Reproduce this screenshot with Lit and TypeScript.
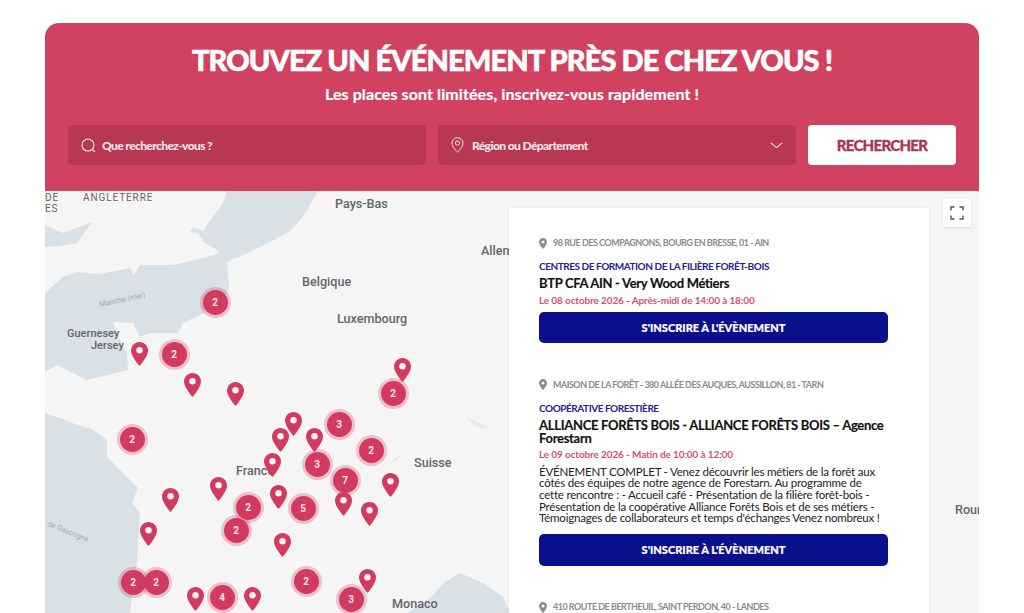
import { LitElement, html, css, svg } from "lit";
import { customElement } from "lit/decorators.js";

const OX = 45, OY = 191;
// pins: centre x, top y (page coordinates)
const PINS: [number, number][] = [
  [139, 342], [192, 373], [235, 382], [402, 358], [293, 412], [280, 428], [314, 428],
  [272, 453], [278, 485], [218, 477], [170, 488], [148, 522], [282, 533], [195, 587],
  [252, 587], [367, 569], [390, 473], [369, 502],
];
const TOP_PINS: [number, number][] = [[343, 492]];
// clusters: centre x, centre y, label
const CLUSTERS: [number, number, number][] = [
  [215, 302, 2], [174, 354, 2], [393, 393, 2], [132, 439, 2], [248, 507, 2], [236, 530, 2],
  [133, 582, 2], [156, 582, 2], [222, 597, 4], [339, 424, 3], [371, 450, 2], [317, 464, 3],
  [345, 480, 7], [303, 508, 5], [306, 581, 2], [351, 599, 3],
];
const LABELS: [string, number, number, string][] = [
  ["Pays-Bas", 335, 204, ""], ["Allen", 481, 251, ""], ["Belgique", 302, 282, ""],
  ["Luxembourg", 337, 319, ""], ["Guernesey", 67, 334, "isle"], ["Jersey", 91, 346, "isle"],
  ["France", 236, 471, ""], ["Suisse", 414, 463, ""], ["Monaco", 392, 604, ""], ["Roun", 955, 510, ""],
  ["ANGLETERRE", 83, 198, "caps"], ["DE", 45, 198, "caps"], ["ES", 45, 209, "caps"],
  ["Manche (mer)", 99, 300, "water rot1"], ["de Gascogne", 46, 532, "water rot2"],
];

const pinSvg = svg`<path d="M8.500 0C3.800 0 0 3.800 0 8.500 0 14.500 8.500 24 8.500 24S17 14.500 17 8.500C17 3.800 13.200 0 8.500 0Z" fill="#d23a60"/><circle cx="8.500" cy="8.200" r="3.200" fill="#fdf3f5"/>`;

@customElement("app-root")
export class AppRoot extends LitElement {
  static styles = css`
    :host { display: block; height: 613px; overflow: hidden; padding: 23px 45px 0; box-sizing: border-box; background: #fff;
      font-family: "Lato", "Liberation Sans", sans-serif; }
    .head { background: #d14261; border-radius: 14px 14px 0 0; height: 168px; padding: 0 23px; box-sizing: border-box; color: #fff; display: flex; flex-direction: column; }
    h1 { margin: 19px 0 0; height: 36px; line-height: 36px; font-size: 29px; font-weight: 900; text-align: center; white-space: nowrap; letter-spacing: -0.9px; -webkit-text-stroke: 0.6px #fff; }
    .sub { margin-top: 5px; height: 22px; line-height: 22px; font-size: 16px; font-weight: 700; text-align: center; letter-spacing: 0.1px; -webkit-text-stroke: 0.2px #fff; }
    .search { margin-top: 20px; display: grid; grid-template-columns: 358px 358px 148px; gap: 12px; height: 40px; }
    .field { background: #b83751; border-radius: 4px; display: flex; align-items: center; padding: 0 13px; gap: 6px; font-size: 12px; font-weight: 900; letter-spacing: -0.6px; color: #f6e4e8; }
    .field svg { flex: none; }
    .field .grow { flex: 1; }
    .loc { gap: 8px; }
    .btn { background: #fff; border-radius: 4px; display: flex; align-items: center; justify-content: center; color: #a83652; font-size: 15px; font-weight: 900; letter-spacing: -0.7px; -webkit-text-stroke: 0.3px #a83652; }
    .map { position: relative; height: 422px; overflow: hidden; background: #f5f5f5; }
    .sea { position: absolute; inset: 0; width: 100%; height: 100%; }
    .lake { fill-opacity: .6; }
    .lab { position: absolute; font-family: Roboto, "Liberation Sans", sans-serif; font-size: 12.6px; font-weight: 500; color: #62666b; line-height: 14px; margin-top: -7px; white-space: nowrap; }
    .isle { font-size: 11px; }
    .caps { font-size: 10px; font-weight: 400; letter-spacing: 0.9px; color: #666; }
    .water { font-size: 7.5px; font-weight: 400; color: #a3abb3; }
    .rot1 { transform: rotate(-12deg); }
    .rot2 { transform: rotate(22deg); }
    .pin { position: absolute; width: 17px; height: 24px; margin-left: -8.5px; }
    .cluster { position: absolute; width: 25px; height: 25px; margin: -12.5px 0 0 -12.5px; border-radius: 50%; background: #d23a60; box-shadow: 0 0 0 3px rgba(210,58,96,.28); color: #fbe4e9; font-family: Roboto, sans-serif; font-size: 10px; font-weight: 700; display: flex; align-items: center; justify-content: center; }
    .card { position: absolute; left: 464px; top: 17px; width: 420px; height: 420px; background: #fff; padding: 28px 41px 0 30px; box-sizing: border-box; box-shadow: 0 0 4px rgba(0,0,0,.06); display: flex; flex-direction: column; gap: 34.5px; }
    .item { display: flex; flex-direction: column; }
    .addr { height: 14px; line-height: 14px; display: flex; align-items: center; gap: 6px; font-size: 9px; font-weight: 700; color: #8b8b8b; letter-spacing: -0.5px; white-space: nowrap; }
    .cat { margin-top: 9px; height: 14px; line-height: 14px; font-size: 10px; font-weight: 700; color: #26228e; letter-spacing: -0.45px; white-space: nowrap; }
    .title { margin-top: 4px; font-size: 13px; line-height: 13px; font-weight: 700; color: #111; letter-spacing: -0.3px; -webkit-text-stroke: 0.15px #111; }
    .date { margin-top: 2.5px; height: 14px; line-height: 14px; font-size: 10px; font-weight: 700; color: #d9506f; letter-spacing: -0.12px; }
    .desc { margin-top: 4.5px; font-size: 11.5px; line-height: 11.7px; color: #222; font-weight: 400; letter-spacing: -0.2px; }
    .go { margin-top: 5.5px; height: 31px; background: #0a0f8c; border-radius: 5px; color: #fff; font-size: 11px; font-weight: 900; display: flex; align-items: center; justify-content: center; -webkit-text-stroke: 0.2px #fff; }
    .desc + .go { margin-top: 9.5px; height: 32px; }
    .full { position: absolute; left: 898px; top: 8px; width: 28px; height: 28px; background: #fff; box-shadow: 0 1px 2px rgba(0,0,0,.12); display: flex; align-items: center; justify-content: center; }
  `;

  private addr(text: string) {
    return html`<div class="addr"><svg width="8" height="11" viewBox="0 0 8 11"><path d="M4 0C1.800 0 0 1.800 0 4c0 2.800 4 7 4 7s4-4.200 4-7c0-2.200-1.800-4-4-4Z" fill="#8b8b8b"/><circle cx="4" cy="3.900" r="1.500" fill="#fff"/></svg><span>${text}</span></div>`;
  }

  render() {
    return html`
      <div class="head">
        <h1>TROUVEZ UN ÉVÉNEMENT PRÈS DE CHEZ VOUS !</h1>
        <div class="sub">Les places sont limitées, inscrivez-vous rapidement !</div>
        <div class="search">
          <div class="field">
            <svg width="15" height="15" viewBox="0 0 15 15" fill="none" stroke="#f6e4e8" stroke-width="1.100"><circle cx="7" cy="7" r="6"/><path d="M11.300 11.300 14 14"/></svg>
            <span>Que recherchez-vous ?</span>
          </div>
          <div class="field loc">
            <svg width="13" height="16" viewBox="0 0 13 16" fill="none" stroke="#f6e4e8" stroke-width="1"><path d="M6.500 15.300S1 10 1 6.200a5.500 5.500 0 0 1 11 0C12 10 6.500 15.300 6.500 15.300Z"/><circle cx="6.500" cy="6" r="2.100"/></svg>
            <span class="grow">Région ou Département</span>
            <svg width="13" height="7" viewBox="0 0 13 7" fill="none" stroke="#f6e4e8" stroke-width="1.100"><path d="M.8.800 6.500 5.600 12.200.800"/></svg>
          </div>
          <div class="btn">RECHERCHER</div>
        </div>
      </div>
      <div class="map">
        <svg class="sea" viewBox="45 191 934 422" fill="#d9e0e6">
          <!-- North Sea, Strait of Dover and Channel as one water body -->
          <path d="M227 191 L318 191 L310 205 L302 218 L290 231 L270 242 L250 252 L233 259 L227 263 L229 287 L227 293 L204 313 L183 323 L178 333 L150 333 L140 337 L133 323 L113 322 L122 345 L127 353 L128 370 L87 380 L57 365 L45 372 L45 293 L63 277 L77 272 L100 274 L130 268 L134 275 L140 265 L173 265 L207 257 L220 253 L217 250 L205 243 L198 233 L190 232 L193 227 L203 231 L212 218 L222 205Z"/>
          <!-- Bristol Channel -->
          <path d="M45 225 L63 233 L92 222 L77 243 L60 246 L45 247Z"/>
          <!-- Bay of Biscay -->
          <path d="M45 413 L60 418 L75 424 L93 430 L107 440 L107 457 L123 473 L138 488 L132 503 L140 513 L137 560 L130 613 L45 613Z"/>
          <!-- Mediterranean -->
          <path d="M407 613 L430 598 L445 582 L460 573 L483 583 L503 597 L510 613Z"/>
          <!-- lakes -->
          <path class="lake" d="M467 418 L473 420 L489 428 L481 428 L470 422Z M398 456 L401 455 L394 462 L392 461Z"/>
        </svg>
        ${LABELS.map(([t, x, y, c]) => html`<div class="lab ${c}" style="left:${x - OX}px;top:${y - OY}px">${t}</div>`)}
        ${CLUSTERS.map(([x, y, n]) => html`<div class="cluster" style="left:${x - OX}px;top:${y - OY}px">${n}</div>`)}
        ${[...PINS, ...TOP_PINS].map(([x, y]) => html`<svg class="pin" viewBox="0 0 17 24" style="left:${x - OX}px;top:${y - OY}px">${pinSvg}</svg>`)}
        <div class="card">
          <div class="item">
            ${this.addr("98 RUE DES COMPAGNONS, BOURG EN BRESSE, 01 - AIN")}
            <div class="cat">CENTRES DE FORMATION DE LA FILIÈRE FORÊT-BOIS</div>
            <div class="title">BTP CFA AIN - Very Wood Métiers</div>
            <div class="date">Le 08 octobre 2026 - Après-midi de 14:00 à 18:00</div>
            <div class="go">S'INSCRIRE À L'ÉVÈNEMENT</div>
          </div>
          <div class="item">
            ${this.addr("MAISON DE LA FORÊT - 380 ALLÉE DES AUQUES, AUSSILLON, 81 - TARN")}
            <div class="cat">COOPÉRATIVE FORESTIÈRE</div>
            <div class="title">ALLIANCE FORÊTS BOIS - ALLIANCE FORÊTS BOIS – Agence Forestarn</div>
            <div class="date">Le 09 octobre 2026 - Matin de 10:00 à 12:00</div>
            <div class="desc">ÉVÉNEMENT COMPLET - Venez découvrir les métiers de la forêt aux côtés des équipes de notre agence de Forestarn. Au programme de cette rencontre : - Accueil café - Présentation de la filière forêt-bois - Présentation de la coopérative Alliance Forêts Bois et de ses métiers - Témoignages de collaborateurs et temps d'échanges Venez nombreux !</div>
            <div class="go">S'INSCRIRE À L'ÉVÈNEMENT</div>
          </div>
          <div class="item">
            ${this.addr("410 ROUTE DE BERTHEUIL, SAINT PERDON, 40 - LANDES")}
          </div>
        </div>
        <div class="full">
          <svg width="14" height="14" viewBox="0 0 14 14" fill="none" stroke="#555" stroke-width="1.400"><path d="M1 4.500V1h3.500M9.500 1H13v3.500M13 9.500V13H9.500M4.500 13H1V9.500"/></svg>
        </div>
      </div>
    `;
  }
}
